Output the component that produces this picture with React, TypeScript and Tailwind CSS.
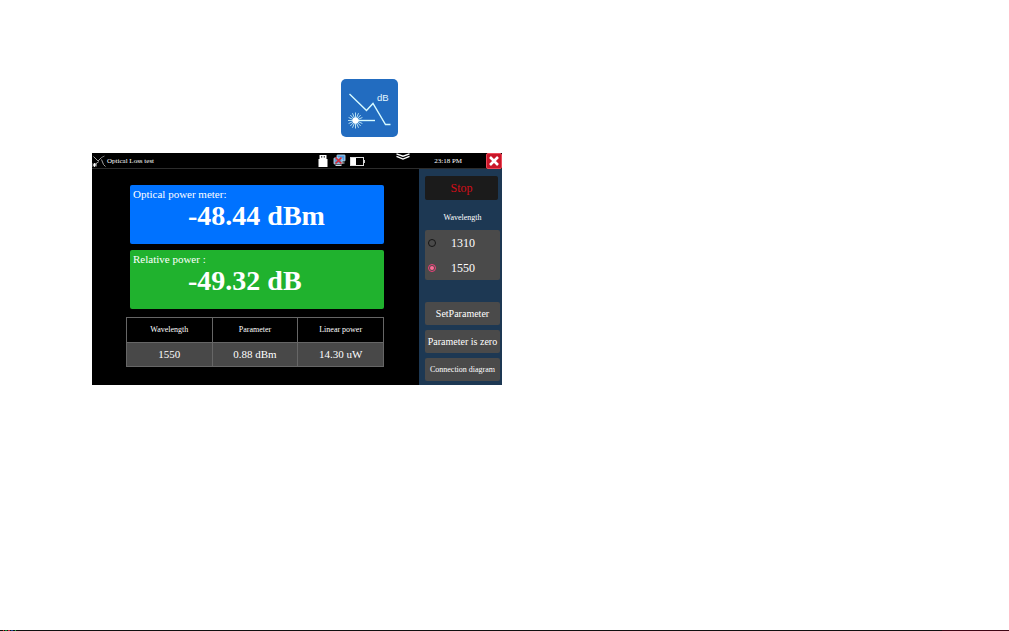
import { useState } from "react";

function LossIcon() {
  return (
    <svg viewBox="0 0 57 58" className="block h-[58px] w-[57px]" role="img" aria-label="Optical loss, dB">
      <rect width="57" height="58" rx="5" fill="#226cc0" />
      <path d="M8.500 15L25.500 31.500L32 24.500L44.500 45.500H49.500" fill="none" stroke="#d8fbff" strokeWidth="1.400" />
      <path d="M15 41.500H34" stroke="#d8fbff" strokeWidth="1.400" />
      <path
        d="M14.500 33.500V49.500M7 41.500H22M9.300 36L19.700 47M19.700 36L9.300 47M11.500 34.200L17.500 48.800M17.500 34.200L11.500 48.800M7.600 38.500L21.400 44.500M21.400 38.500L7.600 44.500"
        stroke="#d8fbff"
        strokeWidth="0.800"
      />
      <circle cx="14.500" cy="41.500" r="3" fill="#fff" />
      <text x="36" y="22" fontFamily="Liberation Sans, sans-serif" fontSize="9.500" fill="#e4f8ff">
        dB
      </text>
    </svg>
  );
}

function TraceIcon() {
  return (
    <svg viewBox="0 0 14 14" className="h-3.5 w-3.5 shrink-0" fill="none" aria-hidden="true">
      <path d="M1.500 2.500L6 7L9.500 3.500M9.500 5.500L11.500 10.500L13.500 12.500M2 11L7 7.500" stroke="#c8c8c8" strokeWidth="0.800" />
      <path d="M9.500 3.500L12.500 2" stroke="#999" strokeWidth="0.800" />
      <path d="M1 9.500L4 12.500M4 9.500L1 12.500M0.500 11H5M2.500 9V13" stroke="#fff" strokeWidth="0.900" />
    </svg>
  );
}

function StatusIcons() {
  return (
    <svg viewBox="0 0 48 13" className="h-[13px] w-12 shrink-0" aria-hidden="true">
      <path d="M1.500 1H8.500V5H9.500V13H0.500V5H1.500Z" fill="#fff" />
      <path d="M3 2.200H4.300V3.500H3ZM5.700 2.200H7V3.500H5.700Z" fill="#222" />
      <rect x="19" y="1" width="8" height="6" rx="0.500" fill="#4d9ae0" stroke="#d6e5f0" strokeWidth="0.800" />
      <rect x="16" y="4" width="8" height="6" rx="0.500" fill="#609dcf" stroke="#d6e5f0" strokeWidth="0.800" />
      <path d="M17.500 11.500H23.500M23 9H26.500" stroke="#ccd8e0" strokeWidth="1.200" />
      <path d="M17.500 3.500L23.500 9.500M23.500 3.500L17.500 9.500" stroke="#d82635" strokeWidth="1.600" />
      <rect x="32.500" y="3.500" width="13" height="8" fill="#000" stroke="#ddd" />
      <rect x="33" y="4" width="5" height="7" fill="#fff" />
      <path d="M46.500 6V9" stroke="#ccc" />
    </svg>
  );
}

function PullDownIcon() {
  return (
    <svg viewBox="0 0 14 8" className="h-2 w-3.5" fill="none" stroke="#fff" strokeWidth="1.300" aria-hidden="true">
      <path d="M0.500 0.800L7 3.200L13.500 0.800M0.500 3.300L7 6L13.500 3.300" />
    </svg>
  );
}

function Reading({ label, value, color }: { label: string; value: string; color: string }) {
  return (
    <section className={`ml-1 h-[59px] rounded-xs pt-[3px] ${color}`}>
      <h2 className="pl-[3px] text-[11px] leading-3">{label}</h2>
      <p className="pl-[58px] text-[28px] leading-8 font-bold">{value}</p>
    </section>
  );
}

const wavelengths = ["1310", "1550"];
const columns = ["Wavelength", "Parameter", "Linear power"];
const results = ["1550", "0.88 dBm", "14.30 uW"];
const actions = [
  { label: "SetParameter", size: "text-[10px]" },
  { label: "Parameter is zero", size: "text-[10px]" },
  { label: "Connection diagram", size: "text-[8px]" },
];

export default function App() {
  const [selected, setSelected] = useState("1550");

  return (
    <div className="flex min-h-screen flex-col bg-white font-['Liberation_Serif',serif] text-white">
      <main className="grow pt-[79px] pr-4 pl-[92px]">
        <div className="w-full max-w-[410px]">
          <div className="flex justify-end pr-[104px] pb-4">
            <LossIcon />
          </div>
          <div className="bg-black">
            <header className="flex h-4 items-center border-b border-[#2c2c2c] text-[7px] leading-4">
              <TraceIcon />
              <h1 className="grow pl-px">Optical Loss test</h1>
              <StatusIcons />
              <div className="ml-[30px] self-start">
                <PullDownIcon />
              </div>
              <time className="ml-6">23:18 PM</time>
              <button
                type="button"
                aria-label="Close"
                className="ml-6 flex h-4 w-4 shrink-0 items-center justify-center rounded-xs border border-[#ec4a59] bg-[#c91629]"
              >
                <svg viewBox="0 0 12 12" className="h-3 w-3" aria-hidden="true">
                  <path d="M2 2L10 10M10 2L2 10" stroke="#fff" strokeWidth="2.600" />
                </svg>
              </button>
            </header>

            <div className="flex">
              <div className="flex grow flex-col gap-1.5 pt-4 pr-[35px] pl-[34px]">
                <Reading label="Optical power meter:" value="-48.44 dBm" color="bg-[#0072ff]" />
                <Reading label="Relative power :" value="-49.32 dB" color="bg-[#20b22e]" />
                <table className="mt-0.5 w-full table-fixed border-collapse text-center">
                  <thead>
                    <tr className="h-[25px] text-[8px]">
                      {columns.map((column) => (
                        <th key={column} scope="col" className="border border-[#666] p-0 font-normal">
                          {column}
                        </th>
                      ))}
                    </tr>
                  </thead>
                  <tbody>
                    <tr className="h-6 bg-[#484848] text-[11px]">
                      {results.map((result) => (
                        <td key={result} className="border border-[#666] p-0">
                          {result}
                        </td>
                      ))}
                    </tr>
                  </tbody>
                </table>
              </div>

              <aside className="w-[83px] shrink-0 bg-[#1d3853] pt-[7px] pr-0.5 pb-1 pl-1.5">
                <button type="button" className="block h-6 w-[73px] rounded-xs bg-[#1b1b1b] text-[12px] leading-6 text-[#d40d18]">
                  Stop
                </button>
                <fieldset className="mt-3">
                  <legend className="w-full pb-1.5 text-center text-[8px] leading-3">Wavelength</legend>
                  <div className="rounded-xs bg-[#4a4a4a]">
                    {wavelengths.map((wavelength) => (
                      <label key={wavelength} className="flex h-[25px] items-center gap-[15px] pl-[3px] text-[12px]">
                        <input
                          type="radio"
                          name="wavelength"
                          value={wavelength}
                          checked={selected === wavelength}
                          onChange={() => setSelected(wavelength)}
                          className="grid h-2 w-2 appearance-none place-items-center rounded-full border border-[#151515] checked:border-[#f0407a] checked:before:h-1 checked:before:w-1 checked:before:rounded-full checked:before:bg-[#ff6e98] checked:before:content-['']"
                        />
                        {wavelength}
                      </label>
                    ))}
                  </div>
                </fieldset>
                <div className="mt-[22px] flex flex-col gap-[5px]">
                  {actions.map((action) => (
                    <button
                      key={action.label}
                      type="button"
                      className={`h-[23px] rounded-xs bg-[#4a4a4a] whitespace-nowrap ${action.size}`}
                    >
                      {action.label}
                    </button>
                  ))}
                </div>
              </aside>
            </div>
          </div>
        </div>
      </main>
      <footer className="flex h-px bg-[#101010]">
        <div className="ml-[3px] w-px bg-[#d33]" />
        <div className="ml-px w-0.5 bg-[#183]" />
        <div className="ml-px w-0.5 bg-[#b34]" />
        <div className="ml-px w-0.5 bg-[#249]" />
        <div className="ml-0.5 w-px bg-[#2b4]" />
        <div className="ml-auto w-[67px] bg-[#400514]" />
      </footer>
    </div>
  );
}
